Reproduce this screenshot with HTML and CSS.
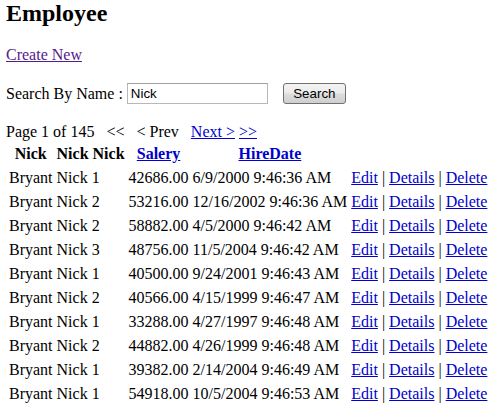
FILE: index.html
```html
<!DOCTYPE html>
<html>
<head>
<meta charset="utf-8">
<title>Employee</title>
<link rel="stylesheet" href="styles.css">
</head>
<body>
<h2 class="title">Employee</h2>
<p class="create"><a class="visited" href="#">Create New</a></p>
<form class="search">
  <label class="search-label">Search By Name :</label>
  <input class="search-input" type="text" value="Nick">
  <button class="search-btn" type="button">Search</button>
</form>
<div class="pager">Page 1 of 145&nbsp;&nbsp;&nbsp;&lt;&lt;&nbsp;&nbsp;&nbsp;&lt; Prev&nbsp;&nbsp;&nbsp;<a href="#">Next &gt;</a> <a href="#">&gt;&gt;</a></div>
<table class="grid">
  <tr>
    <th>Nick</th>
    <th>Nick Nick</th>
    <th><a href="#">Salery</a></th>
    <th><a href="#">HireDate</a></th>
    <th></th>
  </tr>
  <tr><td>Bryant</td><td>Nick 1</td><td>42686.00</td><td>6/9/2000 9:46:36 AM</td><td><a href="#">Edit</a> | <a href="#">Details</a> | <a href="#">Delete</a></td></tr>
  <tr><td>Bryant</td><td>Nick 2</td><td>53216.00</td><td>12/16/2002 9:46:36 AM</td><td><a href="#">Edit</a> | <a href="#">Details</a> | <a href="#">Delete</a></td></tr>
  <tr><td>Bryant</td><td>Nick 2</td><td>58882.00</td><td>4/5/2000 9:46:42 AM</td><td><a href="#">Edit</a> | <a href="#">Details</a> | <a href="#">Delete</a></td></tr>
  <tr><td>Bryant</td><td>Nick 3</td><td>48756.00</td><td>11/5/2004 9:46:42 AM</td><td><a href="#">Edit</a> | <a href="#">Details</a> | <a href="#">Delete</a></td></tr>
  <tr><td>Bryant</td><td>Nick 1</td><td>40500.00</td><td>9/24/2001 9:46:43 AM</td><td><a href="#">Edit</a> | <a href="#">Details</a> | <a href="#">Delete</a></td></tr>
  <tr><td>Bryant</td><td>Nick 2</td><td>40566.00</td><td>4/15/1999 9:46:47 AM</td><td><a href="#">Edit</a> | <a href="#">Details</a> | <a href="#">Delete</a></td></tr>
  <tr><td>Bryant</td><td>Nick 1</td><td>33288.00</td><td>4/27/1997 9:46:48 AM</td><td><a href="#">Edit</a> | <a href="#">Details</a> | <a href="#">Delete</a></td></tr>
  <tr><td>Bryant</td><td>Nick 2</td><td>44882.00</td><td>4/26/1999 9:46:48 AM</td><td><a href="#">Edit</a> | <a href="#">Details</a> | <a href="#">Delete</a></td></tr>
  <tr><td>Bryant</td><td>Nick 1</td><td>39382.00</td><td>2/14/2004 9:46:49 AM</td><td><a href="#">Edit</a> | <a href="#">Details</a> | <a href="#">Delete</a></td></tr>
  <tr><td>Bryant</td><td>Nick 1</td><td>54918.00</td><td>10/5/2004 9:46:53 AM</td><td><a href="#">Edit</a> | <a href="#">Details</a> | <a href="#">Delete</a></td></tr>
</table>
</body>
</html>
```
FILE: styles.css
```css
html, body {
  background: #ffffff;
}
body {
  margin: 0 6px;
  font-family: "Liberation Serif", "Times New Roman", serif;
  font-size: 16px;
  line-height: 18px;
  color: #000000;
}
a {
  color: #0000cc;
  text-decoration: underline;
}
a.visited {
  color: #551a8b;
}
.title {
  margin: 0 0 19px;
  font-family: "Liberation Serif", "Times New Roman", serif;
  font-size: 24px;
  line-height: 27px;
  font-weight: bold;
}
.create {
  margin: 0;
}
.search {
  margin: 19px 0 0;
  display: flex;
  align-items: center;
  height: 21px;
}
.search-label {
  margin-right: 4px;
}
.search-input {
  box-sizing: border-box;
  width: 141px;
  height: 21px;
  margin: 0;
  padding: 0 3px;
  border: 1px solid #b8b8b8;
  border-top-color: #a0a0a0;
  font-family: "Liberation Sans", Arial, sans-serif;
  font-size: 13.33px;
  color: #000;
  background: #fff;
}
.search-btn {
  box-sizing: border-box;
  width: 63px;
  height: 21px;
  margin: 0 0 0 15px;
  padding: 0;
  border: 1px solid #707070;
  border-radius: 3px;
  background: linear-gradient(#f3f3f3 0%, #ebebeb 48%, #dddddd 52%, #cfcfcf 100%);
  font-family: "Liberation Sans", Arial, sans-serif;
  font-size: 13.33px;
  color: #000;
}
.pager {
  margin-top: 19px;
  white-space: nowrap;
}
.grid {
  border-collapse: separate;
  border-spacing: 2px;
  white-space: nowrap;
}
.grid th,
.grid td {
  padding: 1px;
  line-height: 20px;
}
.grid th {
  text-align: center;
  font-weight: bold;
}
.grid td {
  text-align: left;
}
```
